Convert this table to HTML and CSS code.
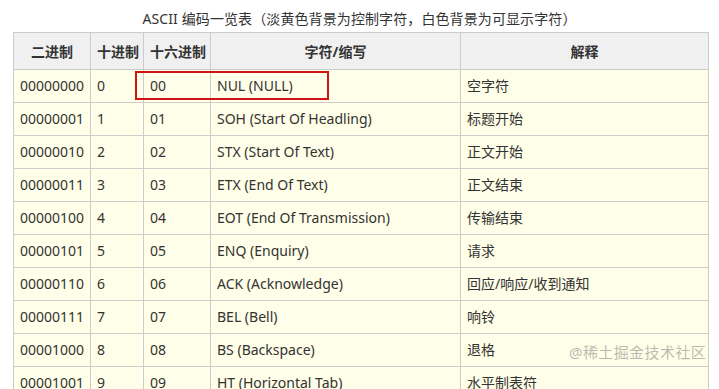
FILE: index.html
```html
<!DOCTYPE html>
<html lang="zh">
<head>
<meta charset="utf-8">
<link rel="stylesheet" href="styles.css">
</head>
<body>
<div class="page">
  <div class="caption">ASCII 编码一览表（淡黄色背景为控制字符，白色背景为可显示字符）</div>
  <div class="table-wrap">
    <table class="ascii">
      <colgroup>
        <col class="c1"><col class="c2"><col class="c3"><col class="c4"><col class="c5">
      </colgroup>
      <thead>
        <tr><th>二进制</th><th>十进制</th><th>十六进制</th><th>字符/缩写</th><th>解释</th></tr>
      </thead>
      <tbody>
        <tr><td>00000000</td><td>0</td><td>00</td><td>NUL (NULL)</td><td>空字符</td></tr>
        <tr><td>00000001</td><td>1</td><td>01</td><td>SOH (Start Of Headling)</td><td>标题开始</td></tr>
        <tr><td>00000010</td><td>2</td><td>02</td><td>STX (Start Of Text)</td><td>正文开始</td></tr>
        <tr><td>00000011</td><td>3</td><td>03</td><td>ETX (End Of Text)</td><td>正文结束</td></tr>
        <tr><td>00000100</td><td>4</td><td>04</td><td>EOT (End Of Transmission)</td><td>传输结束</td></tr>
        <tr><td>00000101</td><td>5</td><td>05</td><td>ENQ (Enquiry)</td><td>请求</td></tr>
        <tr><td>00000110</td><td>6</td><td>06</td><td>ACK (Acknowledge)</td><td>回应/响应/收到通知</td></tr>
        <tr><td>00000111</td><td>7</td><td>07</td><td>BEL (Bell)</td><td>响铃</td></tr>
        <tr><td>00001000</td><td>8</td><td>08</td><td>BS (Backspace)</td><td>退格</td></tr>
        <tr><td>00001001</td><td>9</td><td>09</td><td>HT (Horizontal Tab)</td><td>水平制表符</td></tr>
      </tbody>
    </table>
    <div class="highlight"></div>
  </div>
  <div class="watermark">@稀土掘金技术社区</div>
</div>
</body>
</html>
```
FILE: styles.css
```css
html, body {
  margin: 0;
  padding: 0;
  background: #ffffff;
}
body {
  font-family: "Noto Sans", "Noto Sans CJK SC", sans-serif;
  font-size: 14px;
  color: #333333;
  overflow: hidden;
}
.page {
  position: relative;
  width: 719px;
  height: 389px;
  overflow: hidden;
}
.caption {
  height: 32px;
  line-height: 38px;
  text-align: center;
  font-size: 14px;
  letter-spacing: 0.1px;
  color: #333333;
}
.table-wrap {
  position: relative;
  margin-left: 13px;
  width: 695px;
}
.ascii {
  border-collapse: collapse;
  table-layout: fixed;
  width: 695px;
}
.c1 { width: 77px; }
.c2 { width: 53px; }
.c3 { width: 67px; }
.c4 { width: 250px; }
.c5 { width: 248px; }
.ascii th,
.ascii td {
  border: 1px solid #cccccc;
  padding: 0 6px;
  white-space: nowrap;
  overflow: hidden;
}
.ascii th {
  height: 36px;
  background: #f0f0f0;
  font-weight: bold;
  text-align: center;
  font-size: 14px;
}
.ascii td {
  height: 32px;
  background: #fffee8;
  text-align: left;
  line-height: 30px;
}
.highlight {
  position: absolute;
  left: 122px;
  top: 39px;
  width: 190px;
  height: 25px;
  border: 2px solid #cc1414;
}
.watermark {
  position: absolute;
  left: 569px;
  top: 341px;
  font-size: 15px;
  color: rgba(140, 140, 140, 0.6);
  letter-spacing: 0.4px;
}
```
